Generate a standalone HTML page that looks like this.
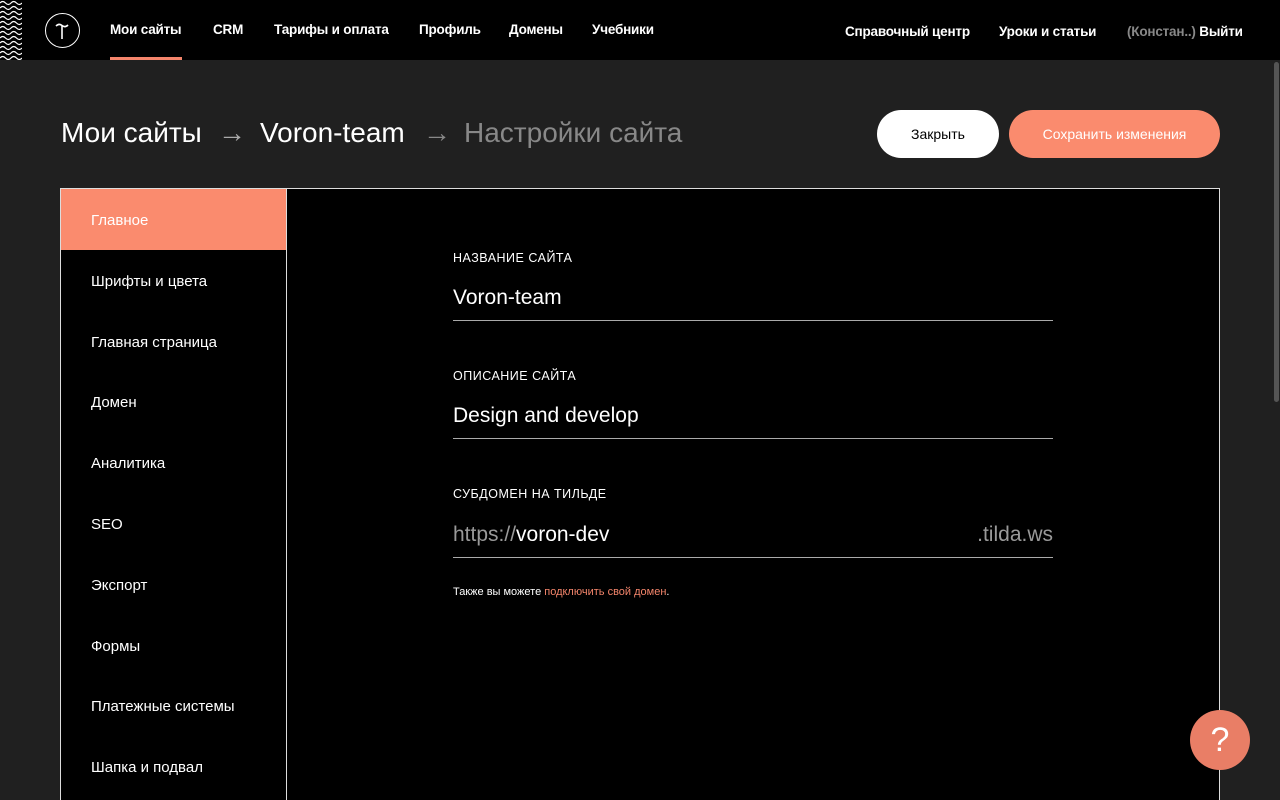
<!DOCTYPE html>
<html><head><meta charset="utf-8"><style>
*{margin:0;padding:0;box-sizing:border-box}
html,body{width:1280px;height:800px;overflow:hidden}
body{background:#202020;font-family:"Liberation Sans",sans-serif;color:#fff;position:relative}
.hdr{position:absolute;left:0;top:0;width:1280px;height:60px;background:#000}
.wave{position:absolute;left:0;top:0;width:22px;height:60px}
.logo{position:absolute;left:45px;top:13px;width:35px;height:35px;border:1.5px solid #fff;border-radius:50%}
.nav{position:absolute;top:22px;font-size:13.5px;font-weight:bold;letter-spacing:-.2px}
.ul{position:absolute;left:110px;top:57px;width:72px;height:3px;background:#f4856b}
.title{position:absolute;top:117px;font-size:28px;color:#fff}
.btn{position:absolute;top:110px;height:48px;border-radius:24px;font-size:14px;text-align:center;line-height:49px}
.panel{position:absolute;left:60px;top:188px;width:1160px;height:620px;border:1px solid #ddd;background:#000}
.side{position:absolute;left:0;top:0;width:226px;height:620px;border-right:1px solid #ddd}
.it{height:60.8px;line-height:64px;padding-left:30px;font-size:15px}
.act{background:#fa8b6e}
.lbl{position:absolute;left:392px;font-size:12.5px;letter-spacing:.5px}
.val{position:absolute;left:392px;width:600px;font-size:21px;border-bottom:1px solid #aaa;height:42px;padding-top:7px}
.scr{position:absolute;left:1274px;top:62px;width:5px;height:340px;background:#555;border-radius:3px}
</style></head><body>
<div class="hdr">
<svg class="wave" viewBox="0 0 22 60"><g fill="none" stroke="#fff" stroke-width="1.2">
<path id="w" d="M0 3 q2.7 -3 5.5 0 t5.5 0 t5.5 0 t5.5 0"/>
<use href="#w" y="5"/><use href="#w" y="10"/><use href="#w" y="15"/><use href="#w" y="20"/><use href="#w" y="25"/><use href="#w" y="30"/><use href="#w" y="35"/><use href="#w" y="40"/><use href="#w" y="45"/><use href="#w" y="50"/><use href="#w" y="55"/></g></svg>
<div class="logo"><svg width="32" height="32" viewBox="0 0 32 32" style="position:absolute;left:0;top:0"><path d="M10 12 q3 -3 6 -0.5 t6 -0.5 M16 11.5 V25" stroke="#fff" stroke-width="1.6" fill="none"/></svg></div>
<div class="nav" style="left:110px">Мои сайты</div>
<div class="nav" style="left:213px">CRM</div>
<div class="nav" style="left:274px">Тарифы и оплата</div>
<div class="nav" style="left:419px">Профиль</div>
<div class="nav" style="left:509px">Домены</div>
<div class="nav" style="left:592px">Учебники</div>
<div class="nav" style="left:845px;top:24px">Справочный центр</div>
<div class="nav" style="left:999px;top:24px">Уроки и статьи</div>
<div class="nav" style="left:1127px;top:24px"><span style="color:#888">(Констан..)</span> Выйти</div>
<div class="ul"></div>
</div>
<div class="scr"></div>
<div class="title" style="left:61px">Мои сайты</div>
<div class="title" style="left:218px;color:#aaa">→</div>
<div class="title" style="left:260px">Voron-team</div>
<div class="title" style="left:423px;color:#888">→</div>
<div class="title" style="left:464px;color:#888">Настройки сайта</div>
<div class="btn" style="left:877px;width:122px;background:#fff;color:#000">Закрыть</div>
<div class="btn" style="left:1009px;width:211px;background:#fa8b6e;color:#fff">Сохранить изменения</div>
<div class="panel">
<div class="side">
<div class="it act">Главное</div><div class="it">Шрифты и цвета</div><div class="it">Главная страница</div><div class="it">Домен</div><div class="it">Аналитика</div><div class="it">SEO</div><div class="it">Экспорт</div><div class="it">Формы</div><div class="it">Платежные системы</div><div class="it">Шапка и подвал</div>
</div>
<div class="lbl" style="top:62px">НАЗВАНИЕ САЙТА</div>
<div class="val" style="top:90px">Voron-team</div>
<div class="lbl" style="top:180px">ОПИСАНИЕ САЙТА</div>
<div class="val" style="top:208px">Design and develop</div>
<div class="lbl" style="top:298px">СУБДОМЕН НА ТИЛЬДЕ</div>
<div class="val" style="top:327px"><span style="color:#999">https://</span>voron-dev<span style="position:absolute;right:0;color:#999">.tilda.ws</span></div>
<div style="position:absolute;left:392px;top:397px;font-size:11px">Также вы можете <span style="color:#f4856b">подключить свой домен</span>.</div>
</div>
<div style="position:absolute;left:1190px;top:710px;width:60px;height:60px;border-radius:50%;background:#e97e66;text-align:center;line-height:60px;font-size:34px;color:#fff">?</div>
</body></html>
